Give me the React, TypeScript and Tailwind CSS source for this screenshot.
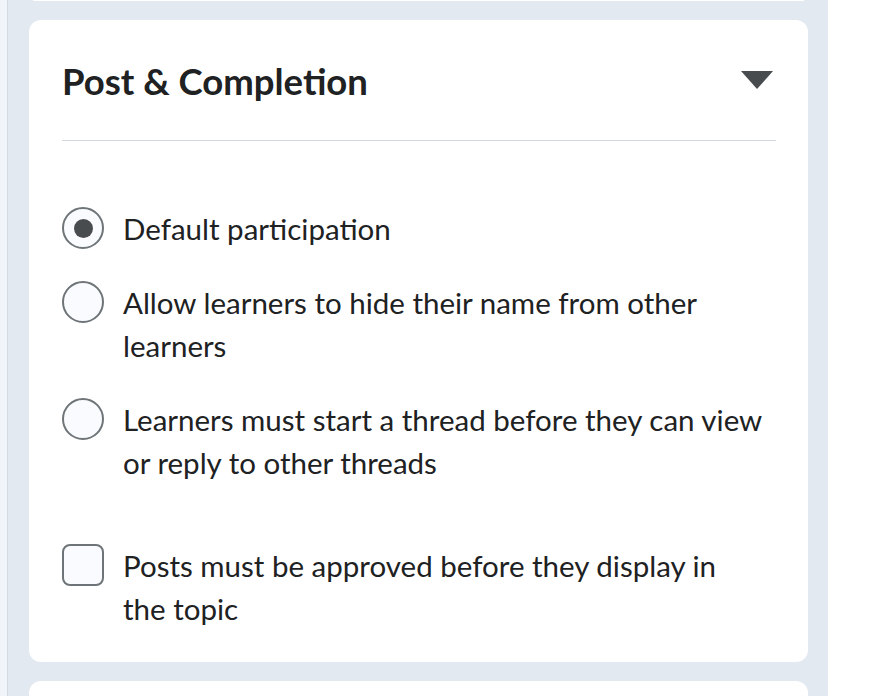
import React from "react";

type Option = { id: string; label: string; checked?: boolean };

const radios: Option[] = [
  { id: "default", label: "Default participation", checked: true },
  { id: "anon", label: "Allow learners to hide their name from other learners" },
  { id: "start", label: "Learners must start a thread before they can view or reply to other threads" },
];

function Radio({ checked }: { checked?: boolean }) {
  return (
    <span className="flex h-[42px] w-[42px] shrink-0 items-center justify-center rounded-full border-2 border-[#6e7477] bg-[#f9fbff]">
      {checked && <span className="h-[19px] w-[19px] rounded-full bg-[#494c4e]" />}
    </span>
  );
}

export default function App() {
  return (
    <div className="flex h-[696px] w-[870px] overflow-hidden bg-white font-['Lato','Noto_Sans',sans-serif] text-[#202122]">
      <div className="w-[7px] bg-[#f1f4f8]" />
      <div className="flex w-[821px] flex-col gap-[19px] border-l border-[#d3dae2] bg-[#e3e9f1] pl-[21px] pr-[20px]">
        {/* bottom of previous card */}
        <div className="mx-[4px] h-[2px] rounded-b-md bg-white" />

        <section className="flex flex-col rounded-xl bg-white pb-[32px] pl-[33px] pr-[32px]">
          <header className="flex h-[121px] items-center justify-between border-b border-[#d3d9e2] pt-[2px]">
            <h2 className="text-[36.5px] font-bold leading-none">Post &amp; Completion</h2>
            <svg width="32" height="18" viewBox="0 0 32 18" className="mr-[3px] mb-[2px]">
              <polygon points="0,0 32,0 16,18" fill="#494c4e" />
            </svg>
          </header>

          <div className="mt-[66px] flex flex-col gap-[31px]">
            {radios.map((r) => (
              <label key={r.id} className="flex items-start gap-[19px]">
                <span className="flex h-[43px] items-center">
                  <Radio checked={r.checked} />
                </span>
                <span className="text-[29.5px] leading-[43px]">{r.label}</span>
              </label>
            ))}
          </div>

          <label className="mt-[60px] flex items-start gap-[19px]">
            <span className="flex h-[43px] items-center">
              <span className="h-[42px] w-[42px] shrink-0 rounded-[8px] border-2 border-[#6e7477] bg-[#f9fbff]" />
            </span>
            <span className="max-w-[620px] text-[29.5px] leading-[43px]">
              Posts must be approved before they display in the topic
            </span>
          </label>
        </section>

        <div className="h-[40px] rounded-t-xl bg-white" />
      </div>
    </div>
  );
}
